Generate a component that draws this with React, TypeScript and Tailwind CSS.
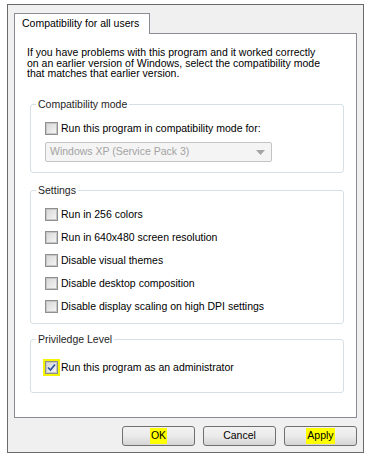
const font = { fontFamily: '"Liberation Sans", Arial, sans-serif' }

function CheckBox({ checked = false }: { checked?: boolean }) {
  return (
    <span className="flex h-[13px] w-[13px] shrink-0 items-center justify-center border border-[#8e8f8f] bg-white">
      <span className="flex h-[11px] w-[11px] items-center justify-center border border-[#c6c6c6] bg-gradient-to-br from-[#d8d8d8] to-[#f4f4f4]">
        {checked && (
          <svg width="9" height="9" viewBox="0 0 9 9">
            <path d="M1 4.5 L3.5 7 L8 1.5" fill="none" stroke="#2a4f9e" strokeWidth="1.6" />
          </svg>
        )}
      </span>
    </span>
  )
}

function Row({ label }: { label: string }) {
  return (
    <div className="flex h-[23px] items-center gap-[3px]">
      <CheckBox />
      <span>{label}</span>
    </div>
  )
}

function Group({ title, className, children }: { title: string; className?: string; children: React.ReactNode }) {
  return (
    <fieldset className={`rounded-[3px] border border-[#d5dfe5] ${className ?? ''}`}>
      <legend className="ml-[5px] px-[2px] leading-[11px] text-[#1e1e1e]">{title}</legend>
      {children}
    </fieldset>
  )
}

function Button({ label, highlight }: { label: string; highlight?: boolean }) {
  return (
    <div className="flex h-[20px] w-[73px] items-center justify-center rounded-[3px] border border-[#707070] bg-gradient-to-b from-[#f2f2f2] via-[#ebebeb] to-[#d4d4d4]">
      <span className={highlight ? 'bg-[#ffff00] px-[1px]' : ''}>{label}</span>
    </div>
  )
}

export default function App() {
  return (
    <div className="h-[458px] w-[372px] bg-white pl-[7px] pt-[4px] text-[10.5px] text-black" style={font}>
      <div className="flex h-[449px] w-[357px] flex-col border border-[#6a6a6a] bg-[#f0f0f0] pl-[6px] pt-[8px]">
        <div className="relative z-10 -mb-px flex h-[21px] w-[136px] items-center border border-b-0 border-[#898c95] bg-white pl-[7px]">
          Compatibility for all users
        </div>
        <div className="flex h-[385px] w-[343px] flex-col border border-[#898c95] bg-white pl-[15px] pr-[12px] pt-[13px]">
          <p className="-ml-[3px] leading-[10.7px]">
            If you have problems with this program and it worked correctly<br />
            on an earlier version of Windows, select the compatibility mode<br />
            that matches that earlier version.
          </p>

          <Group title="Compatibility mode" className="mt-[20px] h-[74px]">
            <div className="pl-[14px] pt-[12px]">
              <div className="flex h-[13px] items-center gap-[3px]">
                <CheckBox />
                <span>Run this program in compatibility mode for:</span>
              </div>
              <div className="mt-[7px] flex h-[20px] w-[227px] items-center justify-between rounded-[2px] border border-[#c3c3c3] bg-[#f4f4f4] pl-[4px] pr-[6px] text-[#a3a3a3]">
                <span>Windows XP (Service Pack 3)</span>
                <svg width="9" height="5" viewBox="0 0 9 5">
                  <path d="M0 0 H9 L4.5 5 Z" fill="#a5a5a5" />
                </svg>
              </div>
            </div>
          </Group>

          <Group title="Settings" className="mt-[12px] h-[139px]">
            <div className="pl-[14px] pt-[7px]">
              <Row label="Run in 256 colors" />
              <Row label="Run in 640x480 screen resolution" />
              <Row label="Disable visual themes" />
              <Row label="Disable desktop composition" />
              <Row label="Disable display scaling on high DPI settings" />
            </div>
          </Group>

          <Group title="Priviledge Level" className="mt-[10px] h-[59px]">
            <div className="pl-[12px] pt-[14px]">
              <div className="flex h-[17px] items-center gap-[1px]">
                <span className="flex h-[17px] w-[17px] items-center justify-center border-2 border-[#f5f500]">
                  <CheckBox checked />
                </span>
                <span>Run this program as an administrator</span>
              </div>
            </div>
          </Group>
        </div>
        <div className="mt-[8px] flex w-[343px] justify-end gap-[8px]">
          <Button label="OK" highlight />
          <Button label="Cancel" />
          <Button label="Apply" highlight />
        </div>
      </div>
    </div>
  )
}
